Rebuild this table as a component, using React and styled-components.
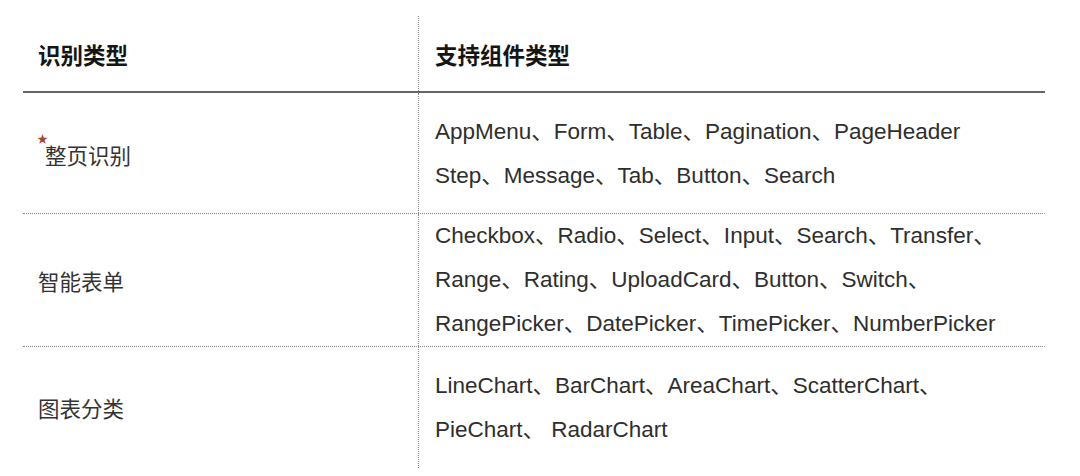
import React from "react";
import styled, { createGlobalStyle } from "styled-components";

const Global = createGlobalStyle`
  html, body { margin: 0; padding: 0; background: #fff; }
  body {
    font-family: "Liberation Sans", "Noto Sans CJK SC", sans-serif;
    color: #333;
  }
`;

const Table = styled.div`
  margin: 16px 35px 0 23px;
  display: flex;
  flex-direction: column;
`;

const Row = styled.div`
  display: grid;
  grid-template-columns: 396px 1fr;
  border-bottom: ${(p) =>
    p.$head ? "2px solid #666" : p.$last ? "none" : "1px dotted #8a8a8a"};
`;

const LeftCell = styled.div`
  border-right: 1px dotted #8a8a8a;
  padding-left: 15px;
  display: flex;
  align-items: center;
  font-size: ${(p) => (p.$head ? "22.5px" : "21.5px")};
  font-weight: ${(p) => (p.$head ? 700 : 400)};
  color: ${(p) => (p.$head ? "#151515" : "#333")};
  padding-top: ${(p) => p.$pt || 0}px;
`;

const RightCell = styled.div`
  padding: ${(p) => p.$pt || 0}px 16px ${(p) => p.$pb || 0}px 16px;
  display: flex;
  flex-direction: column;
  justify-content: center;
  font-size: ${(p) => (p.$head ? "22.5px" : "22.5px")};
  font-weight: ${(p) => (p.$head ? 700 : 400)};
  color: ${(p) => (p.$head ? "#151515" : "#2e2e2e")};
  min-height: ${(p) => (p.$head ? "75px" : "auto")};
`;

const Line = styled.div`
  line-height: 44px;
  white-space: nowrap;
`;

const Label = styled.span`
  display: inline-flex;
  align-items: flex-start;
`;

const Star = styled.span`
  color: #a2472f;
  font-size: 11px;
  line-height: 1;
  width: 8px;
  margin-left: -1px;
  margin-top: -5px;
`;

const rows = [
  {
    label: "整页识别",
    star: true,
    pt: 17,
    pb: 15,
    lines: [
      "AppMenu、Form、Table、Pagination、PageHeader",
      "Step、Message、Tab、Button、Search",
    ],
  },
  {
    label: "智能表单",
    pt: 0,
    pb: 0,
    lines: [
      "Checkbox、Radio、Select、Input、Search、Transfer、",
      "Range、Rating、UploadCard、Button、Switch、",
      "RangePicker、DatePicker、TimePicker、NumberPicker",
    ],
  },
  {
    label: "图表分类",
    pt: 17,
    pb: 16,
    lines: [
      "LineChart、BarChart、AreaChart、ScatterChart、",
      "PieChart、 RadarChart",
    ],
  },
];

export default function App() {
  return (
    <>
      <Global />
      <Table>
        <Row $head>
          <LeftCell $head>识别类型</LeftCell>
          <RightCell $head>支持组件类型</RightCell>
        </Row>
        {rows.map((r, i) => (
          <Row key={r.label} $last={i === rows.length - 1}>
            <LeftCell $pt={r.star ? 2 : 0}>
              <Label>
                {r.star && <Star>★</Star>}
                {r.label}
              </Label>
            </LeftCell>
            <RightCell $pt={r.pt} $pb={r.pb}>
              {r.lines.map((l) => (
                <Line key={l}>{l}</Line>
              ))}
            </RightCell>
          </Row>
        ))}
      </Table>
    </>
  );
}
